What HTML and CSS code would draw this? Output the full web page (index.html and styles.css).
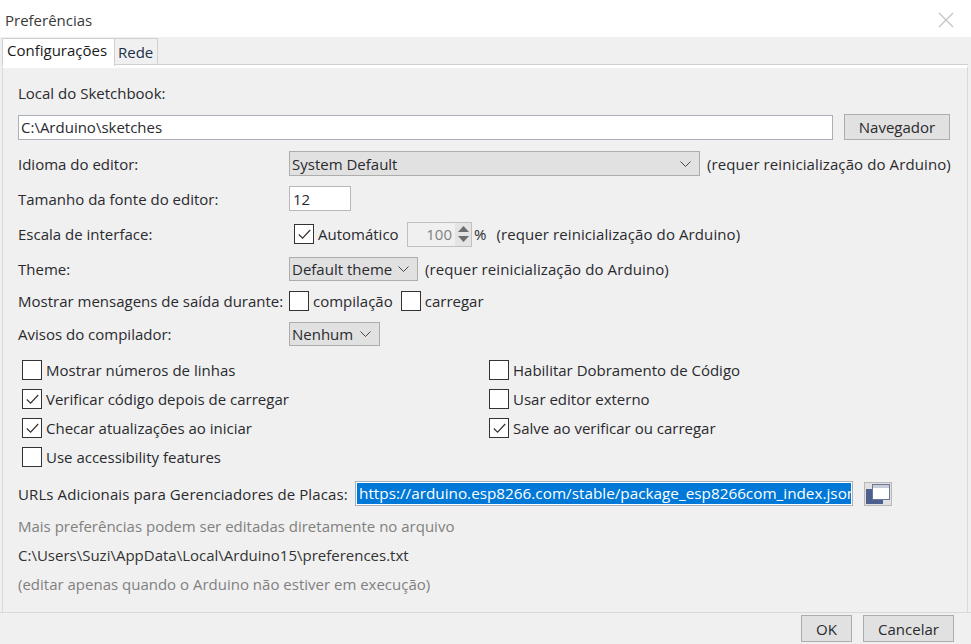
FILE: index.html
```html
<!DOCTYPE html>
<html lang="pt">
<head>
    <meta charset="UTF-8">
    <title>Preferências</title>
    <link rel="stylesheet" href="styles.css">
</head>
<body>
    <div class="window">
        <header class="titlebar">
            <span>Preferências</span>
            <svg class="close" width="16" height="16" viewBox="0 0 16 16"><path d="M1 1L15 15M15 1L1 15" stroke="#c4c0c4" stroke-width="1.2" fill="none"/></svg>
        </header>
        <div class="tabs">
            <div class="tab active">Configurações</div>
            <div class="tab">Rede</div>
        </div>
        <main class="panel">
            <div class="row row-sketch-label">Local do Sketchbook:</div>
            <div class="row row-path">
                <div class="field path">C:\Arduino\sketches</div>
                <div class="btn browse">Navegador</div>
            </div>
            <div class="row row-lang">
                <div class="label">Idioma do editor:</div>
                <div class="select lang">System Default
                    <svg width="11" height="6" viewBox="0 0 11 6"><path d="M.5.5L5.5 5.5L10.5.5" stroke="#444" fill="none"/></svg>
                </div>
                <span class="hint">(requer reinicialização do Arduino)</span>
            </div>
            <div class="row row-font">
                <div class="label">Tamanho da fonte do editor:</div>
                <div class="field font-size">12</div>
            </div>
            <div class="row row-scale">
                <div class="label">Escala de interface:</div>
                <label class="check-label auto">
                    <span class="check"><svg width="13" height="11" viewBox="0 0 13 11"><path d="M.8 5.5L4.6 9.2L12.2 1" stroke="#333" stroke-width="1.2" fill="none"/></svg></span>
                    Automático
                </label>
                <div class="spinner">
                    <span class="spin-value">100</span>
                    <span class="spin-arrows">
                        <svg width="11" height="6" viewBox="0 0 11 6"><path d="M5.5 0L11 6H0Z" fill="#6e6e6e"/></svg>
                        <svg width="11" height="6" viewBox="0 0 11 6"><path d="M0 0H11L5.5 6Z" fill="#6e6e6e"/></svg>
                    </span>
                </div>
                <span class="percent">%</span>
                <span class="hint scale-hint">(requer reinicialização do Arduino)</span>
            </div>
            <div class="row row-theme">
                <div class="label">Theme:</div>
                <div class="select theme">Default theme
                    <svg width="11" height="6" viewBox="0 0 11 6"><path d="M.5.5L5.5 5.5L10.5.5" stroke="#444" fill="none"/></svg>
                </div>
                <span class="hint">(requer reinicialização do Arduino)</span>
            </div>
            <div class="row row-output">
                <div class="label">Mostrar mensagens de saída durante:</div>
                <label class="check-label"><span class="check"></span>compilação</label>
                <label class="check-label upload"><span class="check"></span>carregar</label>
            </div>
            <div class="row row-warn">
                <div class="label">Avisos do compilador:</div>
                <div class="select warn">Nenhum
                    <svg width="11" height="6" viewBox="0 0 11 6"><path d="M.5.5L5.5 5.5L10.5.5" stroke="#444" fill="none"/></svg>
                </div>
            </div>
            <div class="options">
                <label class="check-label"><span class="check"></span>Mostrar números de linhas</label>
                <label class="check-label"><span class="check"></span>Habilitar Dobramento de Código</label>
                <label class="check-label"><span class="check"><svg width="13" height="11" viewBox="0 0 13 11"><path d="M.8 5.5L4.6 9.2L12.2 1" stroke="#333" stroke-width="1.2" fill="none"/></svg></span>Verificar código depois de carregar</label>
                <label class="check-label"><span class="check"></span>Usar editor externo</label>
                <label class="check-label"><span class="check"><svg width="13" height="11" viewBox="0 0 13 11"><path d="M.8 5.5L4.6 9.2L12.2 1" stroke="#333" stroke-width="1.2" fill="none"/></svg></span>Checar atualizações ao iniciar</label>
                <label class="check-label"><span class="check"><svg width="13" height="11" viewBox="0 0 13 11"><path d="M.8 5.5L4.6 9.2L12.2 1" stroke="#333" stroke-width="1.2" fill="none"/></svg></span>Salve ao verificar ou carregar</label>
                <label class="check-label"><span class="check"></span>Use accessibility features</label>
            </div>
            <div class="row row-urls">
                <div class="urls-label">URLs Adicionais para Gerenciadores de Placas:</div>
                <div class="field urls"><span class="selected">https://arduino.esp8266.com/stable/package_esp8266com_index.json</span></div>
                <div class="url-btn">
                    <svg width="26" height="22" viewBox="0 0 26 22">
                        <rect x="1" y="6" width="17" height="15" fill="#4c5f8f"/>
                        <rect x="7.5" y="1.5" width="17" height="15" fill="#fff" stroke="#6b7796"/>
                        <rect x="8" y="2" width="16" height="3" fill="#c8ccd8"/>
                    </svg>
                </div>
            </div>
            <p class="note">Mais preferências podem ser editadas diretamente no arquivo</p>
            <p class="note path-note">C:\Users\Suzi\AppData\Local\Arduino15\preferences.txt</p>
            <p class="note">(editar apenas quando o Arduino não estiver em execução)</p>
        </main>
        <footer class="footer">
            <div class="btn ok">OK</div>
            <div class="btn cancel">Cancelar</div>
        </footer>
    </div>
</body>
</html>
```

FILE: styles.css
```css
* {
    box-sizing: border-box;
}

html, body {
    margin: 0;
    height: 100%;
}

body {
    font-family: "Open Sans", "Noto Sans", sans-serif;
    font-size: 15px;
    color: #2a2a2e;
    background-color: #f0f0f0;
    overflow: hidden;
}

.window {
    height: 644px;
    display: flex;
    flex-direction: column;
}

.titlebar {
    height: 37px;
    flex: none;
    background-color: #ffffff;
    display: flex;
    align-items: center;
    justify-content: space-between;
    padding: 3px 17px 0 5px;
    color: #3a3a3a;
}

.tabs {
    height: 28px;
    flex: none;
    display: flex;
    padding: 1px 0 0 2px;
    position: relative;
    z-index: 1;
}

.tab {
    border: 1px solid #d0d0d0;
    border-left: none;
    height: 27px;
    padding: 3px 4px 0 3px;
    color: #20304a;
}

.tab.active {
    background-color: #ffffff;
    border-left: 1px solid #d0d0d0;
    border-bottom: none;
    width: 113px;
    height: 28px;
    padding: 1px 0 0 4px;
    color: #1a1a1a;
    white-space: nowrap;
}

.panel {
    height: 547px;
    flex: none;
    margin: 0 3px 0 2px;
    padding: 16px 0 0 15px;
    border: 1px solid #d9d9d9;
    border-top: 3px solid #ffffff;
    border-bottom: none;
    box-shadow: 0 -1px 0 #d0d0d0;
}

.row {
    display: flex;
    align-items: center;
}

.label {
    width: 271px;
    flex: none;
}

.row-sketch-label {
    height: 18px;
}

.row-path {
    height: 26px;
    margin-top: 12px;
}

.row-lang {
    height: 25px;
    margin-top: 11px;
}

.row-font {
    height: 25px;
    margin-top: 10px;
}

.row-scale {
    height: 24px;
    margin-top: 11px;
}

.row-theme {
    height: 24px;
    margin-top: 11px;
}

.row-output {
    height: 20px;
    margin-top: 10px;
}

.row-warn {
    height: 24px;
    margin-top: 11px;
}

.field {
    height: 25px;
    background-color: #ffffff;
    border: 1px solid #a9b0b8;
    display: flex;
    align-items: center;
    padding-left: 2px;
    white-space: nowrap;
    overflow: hidden;
}

.path {
    width: 815px;
}

.font-size {
    width: 62px;
    padding-left: 3px;
    border-color: #b8b8b8;
}

.btn {
    background-color: #e1e1e1;
    border: 1px solid #adadad;
    display: flex;
    align-items: center;
    justify-content: center;
}

.browse {
    width: 106px;
    height: 26px;
    margin-left: 11px;
}

.select {
    height: 100%;
    background-color: #e1e1e1;
    border: 1px solid #adadad;
    display: flex;
    align-items: center;
    justify-content: space-between;
    padding: 0 8px 0 2px;
    flex: none;
}

.lang {
    width: 411px;
}

.theme {
    width: 129px;
}

.warn {
    width: 91px;
}

.hint {
    margin-left: 7px;
    letter-spacing: .1px;
}

.check {
    width: 20px;
    height: 20px;
    flex: none;
    background-color: #ffffff;
    border: 1px solid #333333;
    display: flex;
    align-items: center;
    justify-content: center;
    margin-right: 4px;
}

.check-label {
    display: flex;
    align-items: center;
    white-space: nowrap;
}

.auto {
    margin-left: 5px;
    width: 113px;
    flex: none;
}

.upload {
    margin-left: 8px;
}

.spinner {
    width: 65px;
    height: 25px;
    flex: none;
    background-color: #f0f0f0;
    border: 1px solid #c0c0c0;
    display: flex;
    justify-content: flex-end;
    color: #808080;
}

.spin-value {
    align-self: center;
    padding-right: 3px;
}

.spin-arrows {
    width: 16px;
    display: flex;
    flex-direction: column;
    align-items: center;
    justify-content: space-around;
    padding: 2px 0;
    background-color: #e4e4e4;
}

.percent {
    margin-left: 2px;
}

.scale-hint {
    margin-left: 10px;
}

.options {
    display: grid;
    grid-template-columns: 467px auto;
    grid-auto-rows: 20px;
    row-gap: 9px;
    margin: 14px 0 0 4px;
}

.row-urls {
    height: 25px;
    margin-top: 14px;
}

.urls-label {
    width: 337px;
    flex: none;
    white-space: nowrap;
    letter-spacing: .1px;
}

.urls {
    width: 498px;
    padding: 1px;
    flex: none;
}

.selected {
    display: block;
    width: 100%;
    height: 100%;
    overflow: hidden;
    background-color: #0078d7;
    color: #ffffff;
    padding-left: 2px;
    line-height: 21px;
    font-size: 15.3px;
}

.url-btn {
    width: 28px;
    height: 24px;
    margin-left: 11px;
    background-color: #e1e1e1;
    border: 1px solid #b8b8b8;
    display: flex;
    align-items: center;
    justify-content: center;
}

.note {
    margin: 0;
    height: 29px;
    line-height: 29px;
    color: #808080;
}

.row-urls + .note {
    margin-top: 6px;
}

.path-note {
    color: #333333;
}

.footer {
    flex: 1;
    border-top: 1px solid #d9d9d9;
    display: flex;
    justify-content: flex-end;
    gap: 11px;
    padding: 2px 17px 0 0;
}

.ok, .cancel {
    height: 27px;
}

.ok {
    width: 51px;
}

.cancel {
    width: 91px;
}
```
